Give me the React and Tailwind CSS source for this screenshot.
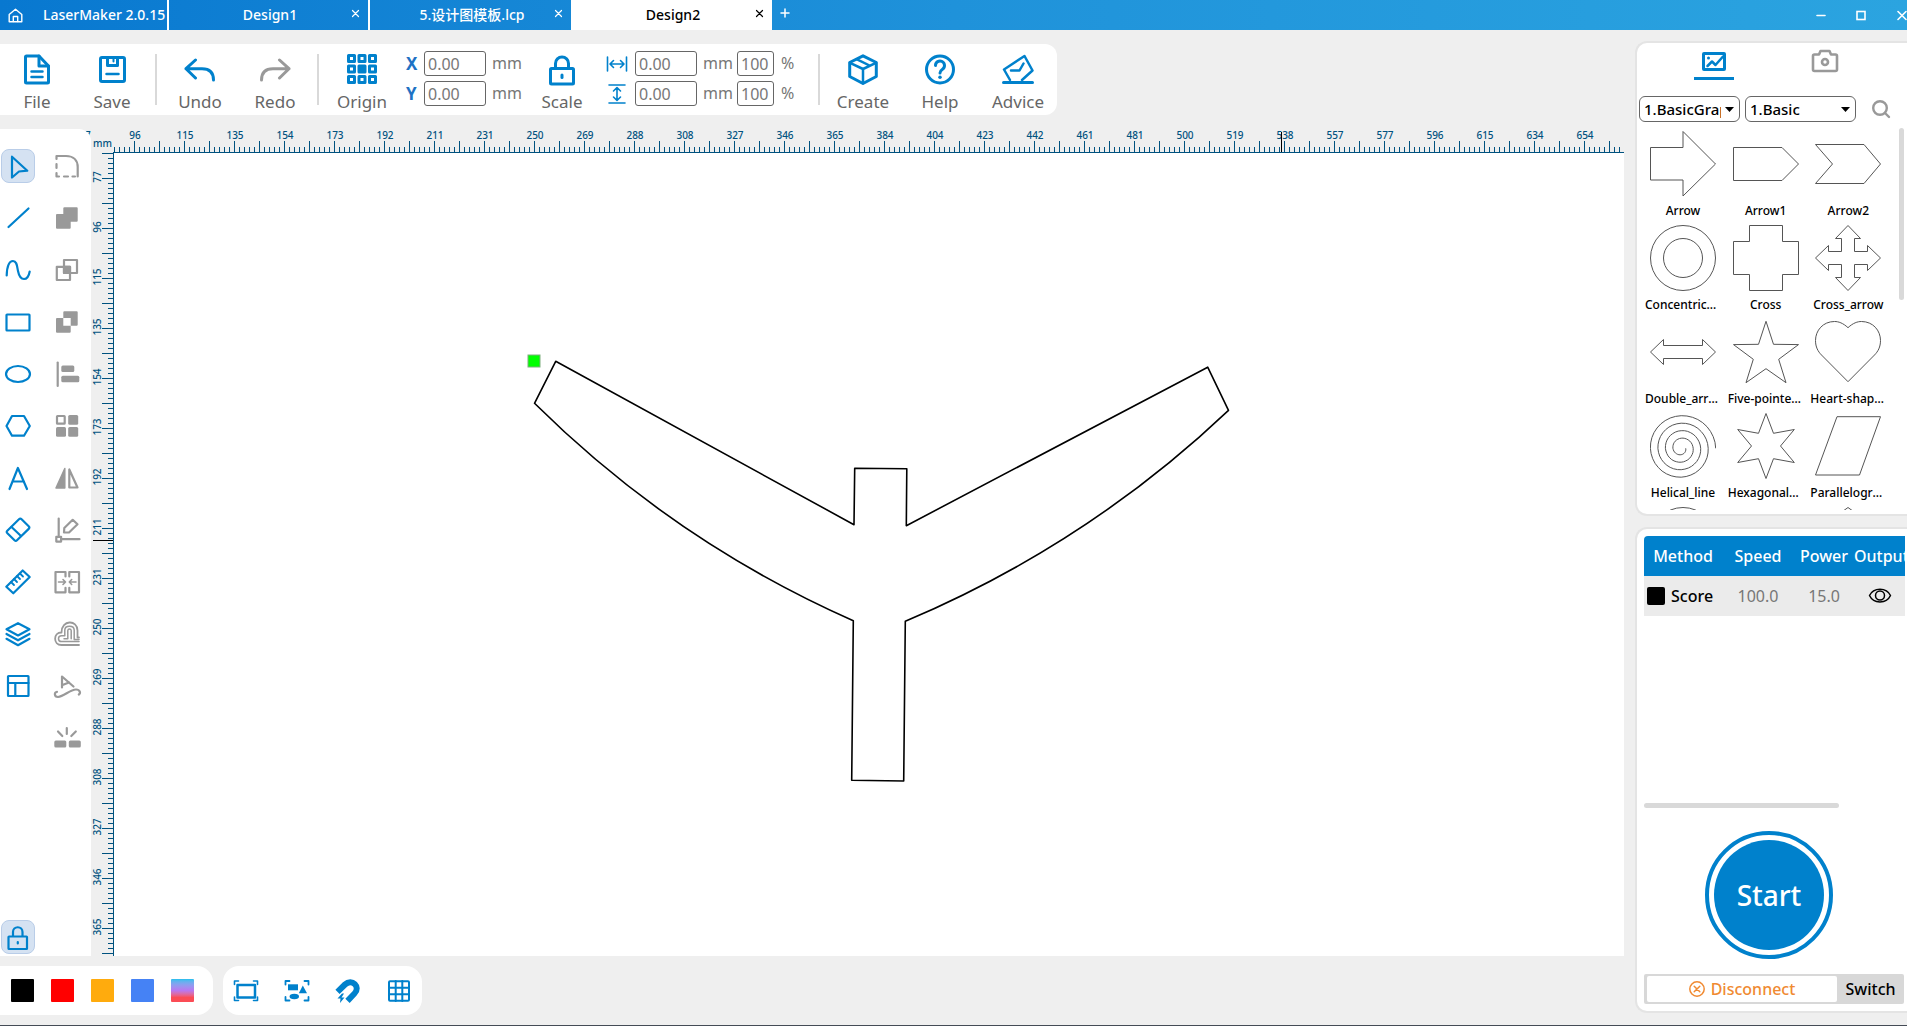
import { useState } from 'react';
import clsx from 'clsx';

const BLUE = '#0081cc';
const GRAY = '#999999';

const Icon = ({ size = 34, color = BLUE, width = 2, children }) => (
  <svg
    width={size}
    height={size}
    viewBox={`0 0 ${size} ${size}`}
    fill="none"
    stroke={color}
    strokeWidth={width}
    strokeLinecap="round"
    strokeLinejoin="round"
    aria-hidden="true"
    className="block shrink-0"
  >
    {children}
  </svg>
);

/* ---------- title bar ---------- */

const tabs = [
  { name: 'Design1', active: false },
  { name: '5.设计图模板.lcp', active: false },
  { name: 'Design2', active: true },
];

const TitleBar = () => (
  <header className="flex h-[30px] shrink-0 bg-linear-to-r from-[#0878d0] via-[#1f92da] to-[#2ba4e0] text-sm font-medium text-white">
    <button className="flex w-[169px] items-center border-r-2 border-white pl-2">
      <Icon size={15} color="#fff" width={1.4}>
        <path d="M1.2 6.5L7.5 1.2L13.8 6.5V13.8H1.2Z" />
        <path d="M5.3 13.5V8.5H9.7V13.5" />
      </Icon>
      <span className="ml-5">LaserMaker 2.0.15</span>
    </button>
    {tabs.map((tab, i) => (
      <div
        key={tab.name}
        className={clsx(
          'flex w-[201px] items-center',
          tab.active ? 'bg-white text-black' : 'text-white',
          i === 0 && 'border-r-2 border-white'
        )}
      >
        <button className="flex-1 pl-7 text-center">{tab.name}</button>
        <button aria-label={`Close ${tab.name}`} className="mb-1 px-2">
          <Icon size={9} color={tab.active ? '#000' : '#fff'} width={1.2}>
            <path d="M1.5 1.5L7.5 7.5M7.5 1.5L1.5 7.5" />
          </Icon>
        </button>
      </div>
    ))}
    <button aria-label="New tab" className="mb-1 px-2">
      <Icon size={10} color="#fff" width={1.5}>
        <path d="M5 1V9M1 5H9" />
      </Icon>
    </button>
    <div className="ml-auto flex items-center gap-7 overflow-hidden">
      <button aria-label="Minimize">
        <Icon size={12} color="#fff" width={1.6}>
          <path d="M2 6.5H10" />
        </Icon>
      </button>
      <button aria-label="Maximize">
        <Icon size={12} color="#fff" width={1.6}>
          <rect x="2" y="2.5" width="8" height="8" strokeLinejoin="miter" />
        </Icon>
      </button>
      <button aria-label="Close window">
        <Icon size={12} color="#fff" width={1.6}>
          <path d="M3 2.5L11 10.5M11 2.5L3 10.5" />
        </Icon>
      </button>
    </div>
  </header>
);

/* ---------- toolbar ---------- */

const ToolButton = ({ label, className, children }) => (
  <button className={clsx('flex flex-col items-center gap-1 pt-[10px]', className)}>
    {children}
    <span className="text-[17px] leading-6 text-[#666]">{label}</span>
  </button>
);

const Divider = () => <div className="mx-[5px] mt-[10px] h-[51px] w-[2px] bg-[#d9d9d9]" />;

const NumberField = ({ id, label, value, className }) => (
  <input
    id={id}
    aria-label={label}
    defaultValue={value}
    className={clsx(
      'h-[25px] rounded-[3px] border border-[#666] bg-white pl-[3px] text-base leading-5 text-[#777] outline-none',
      className
    )}
  />
);

const Toolbar = () => (
  <div className="mt-[14px] flex h-[71px] w-fit shrink-0 rounded-r-xl bg-white">
    <ToolButton label="File" className="w-[74px]">
      <Icon size={32} width={3}>
        <path d="M18 2H5.500Q4.500 2 4.500 3V28Q4.500 29 5.500 29H26.500Q27.500 29 27.500 28V12Z" />
        <path d="M18 2V12H27.500" width="2" />
        <path d="M10.500 17.500H21.500M10.500 23H21.500" strokeWidth="2.500" />
      </Icon>
    </ToolButton>
    <ToolButton label="Save" className="w-[76px]">
      <Icon size={32} width={3}>
        <rect x="4.500" y="3.500" width="24" height="24" rx="1.500" />
        <path d="M11.500 4V11.500H21.500V4" />
        <path d="M17.500 4V7.500" strokeWidth="2" />
        <path d="M10.500 20H22.500" strokeWidth="2.500" />
      </Icon>
    </ToolButton>
    <Divider />
    <ToolButton label="Undo" className="w-[76px]">
      <Icon size={32} width={3}>
        <path d="M11.500 6L2 14.700L11.500 24M2 14.700H18C26 14.700 29.500 19 29.500 26" />
      </Icon>
    </ToolButton>
    <ToolButton label="Redo" className="w-[74px]">
      <Icon size={32} color={GRAY} width={3}>
        <path d="M20.500 6L30 14.700L20.500 24M30 14.700H14C6 14.700 2.500 19 2.500 26" />
      </Icon>
    </ToolButton>
    <Divider />
    <ToolButton label="Origin" className="w-[76px]">
      <Icon size={32} width={3}>
        {[0, 1, 2].map((r) =>
          [0, 1, 2].map((c) => (
            <rect
              key={`${r}${c}`}
              x={2.5 + c * 10.5}
              y={1.5 + r * 10.5}
              width="6"
              height="6"
              fill={r === 1 && c === 1 ? BLUE : 'none'}
            />
          ))
        )}
      </Icon>
    </ToolButton>
    <div className="ml-[6px] mt-[7px] flex flex-col gap-[5px] text-base leading-[25px] text-[#777]">
      {['X', 'Y'].map((axis) => (
        <div key={axis} className="flex h-[25px]">
          <label htmlFor={`pos-${axis}`} className="w-[18px] text-[17px] font-bold text-[#1e72c4]">
            {axis}
          </label>
          <NumberField id={`pos-${axis}`} value="0.00" className="w-[62px]" />
          <span className="ml-[6px] w-[34px]">mm</span>
        </div>
      ))}
    </div>
    <ToolButton label="Scale" className="ml-[6px] w-[60px]">
      <Icon size={32} width={3}>
        <rect x="4.500" y="14.500" width="23" height="15.500" rx="1" />
        <path d="M9.500 14V9.500A6.500 6.500 0 0 1 22.500 9.500V14" />
        <path d="M16 21V23.500" />
      </Icon>
    </ToolButton>
    <div className="ml-[14px] mt-[7px] flex flex-col gap-[5px] text-base leading-[25px] text-[#777]">
      {['Width', 'Height'].map((dim) => (
        <div key={dim} className="flex h-[25px] items-center">
          <Icon size={22} width={1.6}>
            {dim === 'Width' ? (
              <path d="M1.500 4V18M20.500 4V18M4.500 11H17.500M7.500 7.500L4 11L7.500 14.500M14.500 7.500L18 11L14.500 14.500" />
            ) : (
              <path d="M3 2H19M3 20H19M11 5V17M7.500 8L11 4.500L14.500 8M7.500 14L11 17.500L14.500 14" />
            )}
          </Icon>
          <NumberField label={dim} value="0.00" className="ml-[7px] w-[62px]" />
          <span className="ml-[6px] w-[34px]">mm</span>
          <NumberField label={`${dim} percent`} value="100" className="w-[37px]" />
          <span className="ml-[7px] w-[16px]">%</span>
        </div>
      ))}
    </div>
    <div className="w-4" />
    <Divider />
    <ToolButton label="Create" className="w-[76px]">
      <Icon size={32} width={3}>
        <path d="M16 1.800L29.300 8.500V22.500L16 29.500L2.700 22.500V8.500Z" />
        <path d="M3 8.800L16 15L29 8.800M16 15V29M9.500 5.200L22.500 11.500" strokeWidth="2.500" />
      </Icon>
    </ToolButton>
    <ToolButton label="Help" className="w-[78px]">
      <Icon size={32} width={3}>
        <circle cx="16" cy="15.500" r="13.500" />
        <path d="M11.500 11.500A4.500 4.500 0 1 1 18.500 15.200C16.700 16.400 16 17 16 19" />
        <path d="M16 23.200V23.300" strokeWidth="3.500" />
      </Icon>
    </ToolButton>
    <ToolButton label="Advice" className="w-[78px]">
      <Icon size={32} width={2.5}>
        <path d="M1.500 28.500H30.500" strokeWidth="3" />
        <path d="M8 26L2 15.500L22.500 2L30.500 16.500L20 26" />
        <path d="M9 16.500H17.500L21.500 9.500" />
      </Icon>
    </ToolButton>
  </div>
);

/* ---------- left tools ---------- */

const drawTools = [
  ['Select', <path d="M11 7.700L26.300 21.700L18 22.500L11 28.500Z" />],
  ['Line', <path d="M7.500 26L27.500 7.500" />],
  ['Curve', <path d="M5.700 22.500C6 13 8.500 8 12 8C16 8 16 13.500 17 18C18 23 20 26 23 26C26 26 28 22.500 28.700 18.500" />],
  ['Rectangle', <rect x="5.500" y="9.500" width="23" height="16" rx="0.500" />],
  ['Ellipse', <ellipse cx="17" cy="17" rx="12" ry="8" />],
  ['Polygon', <path d="M11 7H23L28.800 17L23 26.700H11L5.500 17Z" />],
  ['Text', <path d="M8.500 28L16.900 7L26 28M11.500 20.500H23" />],
  [
    'Eraser',
    <>
      <path d="M18 6.300Q19.300 5 20.600 6.300L27.700 13.300Q29 14.600 27.700 15.900L16 27.300Q14.800 28.500 13.500 27.300L6.400 20.300Q5 19 6.300 17.700Z" />
      <path d="M10.500 14L20 23" />
    </>,
  ],
  [
    'Measure',
    <>
      <path d="M21.700 5.500L28.700 12L12.300 28.300L5.300 21.700Z" />
      <path d="M10 17L13 20M13 14L16 17M16 11L19 14M19 8.500L22 11.500" strokeWidth="1.800" />
    </>,
  ],
  ['Layers', <path d="M17 6.200L28.500 12.300L17 18.500L5.500 12.300ZM5.500 17L17 23.300L28.500 17M5.500 21.800L17 28.200L28.500 21.800" />],
  [
    'Layout',
    <>
      <rect x="7" y="7" width="20.500" height="20" rx="0.500" />
      <path d="M7 14H27.500M14.300 14V27" />
    </>,
  ],
];

const editTools = [
  [
    'Round corner',
    <>
      <path d="M6.500 10V7H16C24 7 27.700 12 27.700 18V27.500" />
      <path d="M6.500 15V19M6.500 24V27.500H9M14 27.500H18M22.500 27.500H25" />
    </>,
  ],
  ['Union', <path fill={GRAY} stroke="none" d="M14.500 6.300H26.700Q27.700 6.300 27.700 7.300V19.700Q27.700 20.700 26.700 20.700H20.700V26.700Q20.700 27.700 19.700 27.700H7Q6 27.700 6 26.700V14Q6 13 7 13H13.300V7.300Q13.300 6.300 14.500 6.300Z" />],
  [
    'Intersect',
    <>
      <rect x="14" y="7" width="13" height="13" />
      <rect x="6.800" y="13.800" width="13.200" height="13.200" />
      <rect x="14" y="13.800" width="6" height="6.200" fill={GRAY} />
    </>,
  ],
  [
    'Exclude',
    <>
      <path fill={GRAY} stroke="none" d="M13.300 7.300Q13.300 6.300 14.300 6.300H26.700Q27.700 6.300 27.700 7.300V19.700Q27.700 20.700 26.700 20.700H20.700V13H13.300Z" />
      <path fill={GRAY} stroke="none" d="M13.300 13V20.700H20.700V26.700Q20.700 27.700 19.700 27.700H7Q6 27.700 6 26.700V14Q6 13 7 13Z" />
    </>,
  ],
  [
    'Align',
    <>
      <path d="M7.700 5.500V29" />
      <g fill={GRAY} stroke="none">
        <rect x="11.300" y="8.500" width="13" height="6.500" rx="1.500" />
        <rect x="11.300" y="18.800" width="18" height="6.500" rx="1.500" />
      </g>
    </>,
  ],
  [
    'Array',
    <>
      <rect x="7" y="7" width="7.700" height="7.700" rx="0.500" />
      <g fill={GRAY} stroke="none">
        <rect x="18.200" y="6" width="10" height="9.800" rx="1.500" />
        <rect x="6" y="18" width="10" height="9.800" rx="1.500" />
        <rect x="18.200" y="18" width="10" height="9.800" rx="1.500" />
      </g>
    </>,
  ],
  [
    'Mirror',
    <>
      <path d="M14.800 7.500V27H6Z" fill={GRAY} strokeWidth="1.500" />
      <path d="M19.300 8.500V26.500H27.500Z" />
    </>,
  ],
  [
    'Edit nodes',
    <>
      <path d="M8.700 5.500V22.500M11.500 26.200H29.500" />
      <rect x="6.300" y="23.800" width="4.800" height="4.800" />
      <path d="M14 19.500L14.300 15L22.700 6.800L27.500 11.300L19 19.500Z" />
    </>,
  ],
  [
    'Merge',
    <>
      <path d="M15.500 11.500V7H5.500V27.300H15.500V22.800M19.300 11.500V7H29V27.300H19.300V22.800" />
      <path d="M8.500 17H15.500M13 14.500L15.500 17L13 19.500M26 17H19.300M21.700 14.500L19.300 17L21.700 19.500" strokeWidth="1.600" />
    </>,
  ],
  [
    'Offset',
    <>
      <path d="M29 28H11.500C3 28 3 15.500 11.500 15.500C11.500 2.500 27.500 2.500 27.500 13.500V20.500H29" strokeWidth="1.800" />
      <path d="M29 24.500H11.500C7.500 24.500 7.500 18.800 11.500 18.800H14.800V13C15 8 24 8 24.200 13V22.500H29" strokeWidth="1.500" />
      <path d="M14 21.800H17.800V13.500C18 11.500 21 11.500 21.200 13.500V21.800" strokeWidth="1.500" />
    </>,
  ],
  [
    'Text on path',
    <>
      <path d="M12 18.500V7.500L23.500 17.500M12.500 16L19 13.500" />
      <path d="M7 22.800C4 23 4 28 8 28C14 27.500 20 20.500 26 20.500C30 20.500 31 24 28.800 25.500" />
    </>,
  ],
  [
    'Split',
    <>
      <path d="M16.800 7V13M8 10.500L12.300 15M25.800 10.500L21.300 15" />
      <g fill={GRAY} stroke="none">
        <rect x="4.300" y="19.500" width="12" height="7" rx="1.500" />
        <rect x="18.800" y="19.500" width="12" height="7" rx="1.500" />
      </g>
    </>,
  ],
];

const activeButton = 'rounded-lg border border-[#b9cde8] bg-[#d5e2f2]';

const ToolIconButton = ({ name, active, color, children }) => (
  <button
    aria-label={name}
    className={clsx('flex h-[34px] w-[34px] items-center justify-center', active && activeButton)}
  >
    <Icon size={34} color={color} width={2.2}>
      {children}
    </Icon>
  </button>
);

const LeftTools = () => {
  const [tool, setTool] = useState('Select');
  return (
    <aside className="relative z-10 mt-[14px] flex w-[91px] shrink-0 flex-col rounded-tr-xl bg-white pb-[2px] pl-px pt-5">
      <div className="flex gap-[15px]">
        <div className="flex flex-col gap-[18px]" onClick={(e) => {
          const name = e.target.closest('button')?.getAttribute('aria-label');
          if (name) setTool(name);
        }}>
          {drawTools.map(([name, shape]) => (
            <ToolIconButton key={name} name={name} active={tool === name}>
              {shape}
            </ToolIconButton>
          ))}
        </div>
        <div className="flex flex-col gap-[18px]">
          {editTools.map(([name, shape]) => (
            <ToolIconButton key={name} name={name} color={GRAY}>
              {shape}
            </ToolIconButton>
          ))}
        </div>
      </div>
      <div className="mt-auto">
        <ToolIconButton name="Lock" active>
          <rect x="7.500" y="16.500" width="18.500" height="12.500" rx="0.500" />
          <path d="M12 16V12A4.700 4.700 0 0 1 21.500 12V16M16.800 22V23.500" />
        </ToolIconButton>
      </div>
    </aside>
  );
};

/* ---------- rulers and canvas ---------- */

const RULER = '#00527f';
const topLabels = [77, 96, 115, 135, 154, 173, 192, 211, 231, 250, 269, 288, 308, 327, 346, 365, 384, 404, 423, 442, 461, 481, 500, 519, 538, 557, 577, 596, 615, 634, 654];
const sideLabels = [77, 96, 115, 135, 154, 173, 192, 211, 231, 250, 269, 288, 308, 327, 346, 365];

// one tick each 5px, a long one each 25px, a label each 50px
const TopRuler = () => (
  <svg className="block h-[38px] w-full" shapeRendering="crispEdges" aria-hidden="true">
    {Array.from({ length: 306 }, (_, i) => {
      const x = 31 + i * 5;
      const long = (x - 51) % 25 === 0;
      return <rect key={i} x={x} y={long ? 26 : 32} width="1" height={long ? 12 : 6} fill={RULER} />;
    })}
    <rect x="30" y="37" width="100%" height="1" fill={RULER} />
    {topLabels.map((n, i) => (
      <text key={n} x={2 + i * 50} y="24" textAnchor="middle" fontSize="10" fontWeight="500" fill={RULER}>
        {n}
      </text>
    ))}
    <text x="10" y="32" fontSize="10" fontWeight="500" fill={RULER}>
      mm
    </text>
    <rect x="1198" y="17" width="1" height="20" fill="#000" />
  </svg>
);

const SideRuler = () => (
  <svg className="block h-full w-[23px] shrink-0" shapeRendering="crispEdges" aria-hidden="true">
    {Array.from({ length: 161 }, (_, i) => {
      const y = i * 5;
      const long = y % 25 === 0;
      return <rect key={i} x={long ? 11 : 17} y={y} width={long ? 12 : 6} height="1" fill={RULER} />;
    })}
    <rect x="22" y="0" width="1" height="100%" fill={RULER} />
    {sideLabels.map((n, i) => (
      <text
        key={n}
        transform={`translate(10 ${24 + i * 50}) rotate(-90)`}
        textAnchor="middle"
        fontSize="10"
        fontWeight="500"
        fill={RULER}
      >
        {n}
      </text>
    ))}
    <rect x="2" y="387" width="20" height="1" fill="#000" />
  </svg>
);

const Canvas = () => (
  <svg className="h-full min-w-0 flex-1 bg-white" role="img" aria-label="Drawing">
    <g transform="translate(-114 -153)">
      <path
        fill="none"
        stroke="#000"
        strokeWidth="1.600"
        strokeLinejoin="round"
        d="M555.700 361.300L534.500 403.300Q674 541.500 853.300 620.700L851.700 780.300L903.700 781L905.300 621.300Q1087 544.500 1228.500 410.300L1207.700 367.200L906.300 525.700L906.800 468.700L854.700 468.300L854 524.700Z"
      />
      <rect x="528" y="355" width="12" height="12" fill="#00ff00" stroke="#7fae7f" strokeWidth="1" />
    </g>
  </svg>
);

/* ---------- bottom bar ---------- */

const swatches = [
  ['Black', 'bg-black'],
  ['Red', 'bg-[#ff0000]'],
  ['Orange', 'bg-[#ffab0d]'],
  ['Blue', 'bg-[#4582f5]'],
  ['Gradient', 'bg-linear-to-b from-[#1dbfee] via-[#b877f0] via-50% to-[#fb4c55] to-80%'],
];

const BottomBar = () => (
  <div className="flex h-[69px] shrink-0 gap-[10px] pb-[10px] pt-[10px]">
    <div className="flex items-center gap-[17px] rounded-r-2xl bg-white pl-[11px] pr-[19px]">
      {swatches.map(([name, bg]) => (
        <button key={name} aria-label={name} className={clsx('h-[23px] w-[23px] rounded-[1px]', bg)} />
      ))}
    </div>
    <div className="flex items-center gap-[21px] rounded-2xl bg-white px-[8px]">
      <button aria-label="Fit frame">
        <Icon size={30} width={2.5}>
          <rect x="6.500" y="9" width="17.500" height="12.500" />
          <path d="M3.500 8.500V5H7.500M22.500 5H26.500V8.500M26.500 21V24.500H22.500M7.500 24.500H3.500V21" strokeWidth="1.600" />
        </Icon>
      </button>
      <button aria-label="Fit shapes">
        <Icon size={30} width={1.8}>
          <path d="M3.500 8.500V5H7.500M22.500 5H26.500V8.500M26.500 21V24.500H22.500M7.500 24.500H3.500V21" />
          <g fill={BLUE} stroke="none">
            <rect x="6" y="8.300" width="10" height="6" />
            <path d="M20.800 9.500L25 17.300H16.800Z" />
            <ellipse cx="12.300" cy="20.500" rx="4.700" ry="2.700" />
          </g>
        </Icon>
      </button>
      <button aria-label="Snap">
        <Icon size={30} width={6}>
          <path strokeLinecap="butt" d="M4.500 15.800L12 8.500C19 2 28 11 21.500 17.500L14.500 24.800" />
          <path d="M9 17.500L4.500 22.500H7.500L7 27L11.500 21.500H8.500L11 17.500Z" fill={BLUE} stroke="none" />
        </Icon>
      </button>
      <button aria-label="Grid">
        <Icon size={30} width={2}>
          <rect x="5" y="5.300" width="20" height="19.500" rx="1" />
          <path d="M11.700 5V25M18.300 5V25M5 11.700H25M5 18.300H25" />
        </Icon>
      </button>
    </div>
  </div>
);

/* ---------- shape library ---------- */

// clockwise spiral, four turns from the centre outwards
const spiral = Array.from({ length: 145 }, (_, i) => {
  const a = (i / 36) * Math.PI * 2;
  const r = 4.5 + (i / 36) * 7.5;
  return `${(31.2 + r * Math.cos(a)).toFixed(1)},${(35.3 + r * Math.sin(a)).toFixed(1)}`;
}).join(' ');

const shapes = [
  ['Arrow', <path d="M.5 16.500H33V.5L65.500 33L33 65V49H.5Z" />],
  ['Arrow1', <path d="M.5 16.500H49L65.500 33L49 49.500H.5Z" />],
  ['Arrow2', <path d="M.5 13.500H49L65.500 33L49 52.500H.5L17.500 33Z" />],
  [
    'Concentric_circles',
    <>
      <circle cx="33" cy="33" r="32.500" />
      <circle cx="33" cy="33" r="19.500" />
    </>,
  ],
  ['Cross', <path d="M16.500 .5H49.500V16.500H65.500V49.500H49.500V65.500H16.500V49.500H.5V16.500H16.500Z" />],
  ['Cross_arrow', <path d="M33 .5L45.500 13.500H39.500V26.500H52.500V20.500L65.500 33L52.500 45.500V39.500H39.500V52.500H45.500L33 65.500L20.500 52.500H26.500V39.500H13.500V45.500L.5 33L13.500 20.500V26.500H26.500V13.500H20.500Z" />],
  ['Double_arrow', <path d="M.5 33L13.500 20.500V26.500H52.500V20.500L65.500 33L52.500 45.500V39.500H13.500V45.500Z" />],
  ['Five-pointed_star', <path d="M33 2.300L40.500 25.300L65.500 25.600L45.700 40.300L53 63.700L33 49.700L13 63.700L20.300 40.300L.5 25.600L25.500 25.300Z" />],
  ['Heart-shaped', <path d="M33 8.700C28 4 23.500 2.500 19.500 2.500C8 2.500 .5 11.500 .5 21.500C.5 28 3 32.500 6.500 36L33 62.700L59.500 36C63 32.500 65.500 28 65.500 21.500C65.500 11.500 58 2.500 46.500 2.500C42.500 2.500 38 4 33 8.700Z" />],
  ['Helical_line', <polyline points={spiral} />],
  ['Hexagonal_star', <path d="M33 .5L40.500 20.300L61.300 16.500L47.500 33L61.300 49.500L40.500 45.700L33 65.500L25.500 45.700L4.700 49.500L18.500 33L4.700 16.500L25.500 20.300Z" />],
  ['Parallelogram', <path d="M22 3.700H65.500L44.500 62H.5Z" />],
  ['', <circle cx="33" cy="33" r="32.500" />],
  ['', null],
  ['', <path d="M33 .5L65.500 24L53 62H13L.5 24Z" />],
];

const Select = ({ label, value, className }) => (
  <div className={clsx('relative', className)}>
    <select
      aria-label={label}
      defaultValue={value}
      className="h-[26px] w-full appearance-none rounded-[6px] border border-[#666] bg-white pl-1 pr-[18px] text-[15px] font-medium leading-6 outline-none"
    >
      <option>{value}</option>
    </select>
    <svg width="9" height="5" className="pointer-events-none absolute right-[6px] top-[11px]" aria-hidden="true">
      <path d="M0 0H9L4.500 5Z" />
    </svg>
  </div>
);

const Library = () => (
  <section className="flex h-[475px] shrink-0 flex-col rounded-l-xl border-2 border-r-0 border-[#e4e4e4] bg-white">
    <div className="flex h-[53px] shrink-0 pl-[31px]">
      <button aria-label="Gallery" className="flex w-[91px] flex-col items-center pt-[6px]">
        <Icon size={26} width={3}>
          <rect x="2.500" y="4.500" width="21" height="16" rx="0.500" />
          <path d="M6.500 17L11 12.500L14.500 16L22 7.500" strokeWidth="2.500" />
          <path d="M7.500 9V9.100" />
        </Icon>
        <span className="mt-[2px] h-[3px] w-10 bg-[#0081cc]" />
      </button>
      <button aria-label="Camera" className="ml-[20px] flex w-[91px] flex-col items-center pt-[5px]">
        <Icon size={28} color={GRAY} width={2.6}>
          <path d="M3.500 6.500H8L9.500 3H18.500L20 6.500H24.500Q26 6.500 26 8V21.500Q26 23 24.500 23H3.500Q2 23 2 21.500V8Q2 6.500 3.500 6.500Z" />
          <circle cx="14" cy="14" r="3" />
        </Icon>
      </button>
    </div>
    <div className="flex items-center gap-[5px] pl-[2px]">
      <Select label="Library" value="1.BasicGraphics" className="w-[101px]" />
      <Select label="Category" value="1.Basic" className="w-[111px]" />
      <button aria-label="Search" className="ml-[10px]">
        <Icon size={20} color={GRAY} width={2.4}>
          <circle cx="9" cy="9" r="6.800" />
          <path d="M14 14L18 18" />
        </Icon>
      </button>
    </div>
    <div className="mb-[4px] mt-[6px] flex min-h-0 flex-1 overflow-hidden">
      <ul className="grid w-[252px] auto-rows-[94px] grid-cols-3 pl-[4px] pt-[3px]">
        {shapes.map(([name, shape], i) => (
          <li key={i} className="flex w-[84px] flex-col items-center">
            <svg width="66" height="66" viewBox="0 0 66 66" fill="none" stroke="#555" className="shrink-0" aria-hidden="true">
              {shape}
            </svg>
            <span className="mt-[6px] w-[76px] truncate text-center text-xs font-medium leading-4">{name}</span>
          </li>
        ))}
      </ul>
      <div className="ml-[10px] h-[172px] w-[5px] rounded-sm bg-[#d9d9d9]" />
    </div>
  </section>
);

/* ---------- job panel ---------- */

const JobPanel = () => (
  <section className="mt-[11px] flex min-h-0 flex-1 flex-col rounded-l-xl border-2 border-r-0 border-[#e4e4e4] bg-white pb-[7px] pl-[7px] pr-[2px] pt-[7px]">
    <table className="w-full table-fixed text-center text-base">
      <thead className="bg-[#0081cc] text-white">
        <tr className="h-10">
          <th className="w-[78px] rounded-tl-sm p-0 font-medium">Method</th>
          <th className="w-[72px] p-0 font-medium">Speed</th>
          <th className="w-[60px] p-0 font-medium">Power</th>
          <th className="p-0 font-medium">Output</th>
        </tr>
      </thead>
      <tbody className="bg-[#ebebeb] text-[#777]">
        <tr className="h-10">
          <td className="p-0">
            <div className="flex items-center gap-[6px] pl-[3px] font-medium text-black">
              <span className="h-[18px] w-[18px] rounded-[2px] bg-black" />
              Score
            </div>
          </td>
          <td className="p-0">100.0</td>
          <td className="p-0">15.0</td>
          <td className="p-0">
            <button aria-label="Toggle output" className="block w-full pl-[14px]">
              <Icon size={24} color="#000" width={1.5}>
                <path d="M1.500 11.500C5.500 3 18.500 3 22.500 11.500C18.500 20 5.500 20 1.500 11.500Z" />
                <circle cx="12" cy="11.500" r="4.500" />
              </Icon>
            </button>
          </td>
        </tr>
      </tbody>
    </table>
    <div className="mt-[187px] h-[5px] w-[195px] rounded-sm bg-[#d9d9d9]" />
    <div className="flex flex-1 items-center justify-center pr-[11px] pb-[8px] pt-[16px]">
      <button className="h-32 w-32 rounded-full border-4 border-[#0081cc] bg-white p-[5px]">
        <span className="flex h-full w-full items-center justify-center rounded-full bg-[#0081cc] text-[28px] font-medium text-white">
          Start
        </span>
      </button>
    </div>
    <div className="mr-px flex h-[30px] rounded-[2px] bg-[#d8d8d8] py-[2px] pl-[3px] text-base font-medium">
      <button className="flex w-[190px] items-center justify-center gap-[6px] rounded-[2px] bg-white text-[#f08a32]">
        <Icon size={16} color="#f08a32" width={1.5}>
          <circle cx="8" cy="8" r="7.200" />
          <path d="M5.200 5.200L10.800 10.800M10.800 5.200L5.200 10.800" />
        </Icon>
        Disconnect
      </button>
      <button className="flex-1 text-black">Switch</button>
    </div>
  </section>
);

const App = () => (
  <div className="flex h-screen flex-col overflow-hidden bg-white pr-[3px] font-['Noto_Sans','Noto_Sans_CJK_SC',sans-serif]">
    <TitleBar />
    <div className="flex min-h-0 flex-1 border-b border-[#444b55] bg-[#efefef]">
      <div className="flex min-w-0 flex-1 flex-col">
        <Toolbar />
        <div className="flex min-h-0 flex-1">
          <LeftTools />
          <main className="-ml-2 flex min-w-0 flex-1 flex-col overflow-hidden">
            <TopRuler />
            <div className="flex min-h-0 flex-1 pl-2">
              <SideRuler />
              <Canvas />
            </div>
          </main>
        </div>
        <BottomBar />
      </div>
      <div className="ml-[11px] flex w-[272px] shrink-0 flex-col pb-[12px] pt-[11px]">
        <Library />
        <JobPanel />
      </div>
    </div>
  </div>
);

export default App;
